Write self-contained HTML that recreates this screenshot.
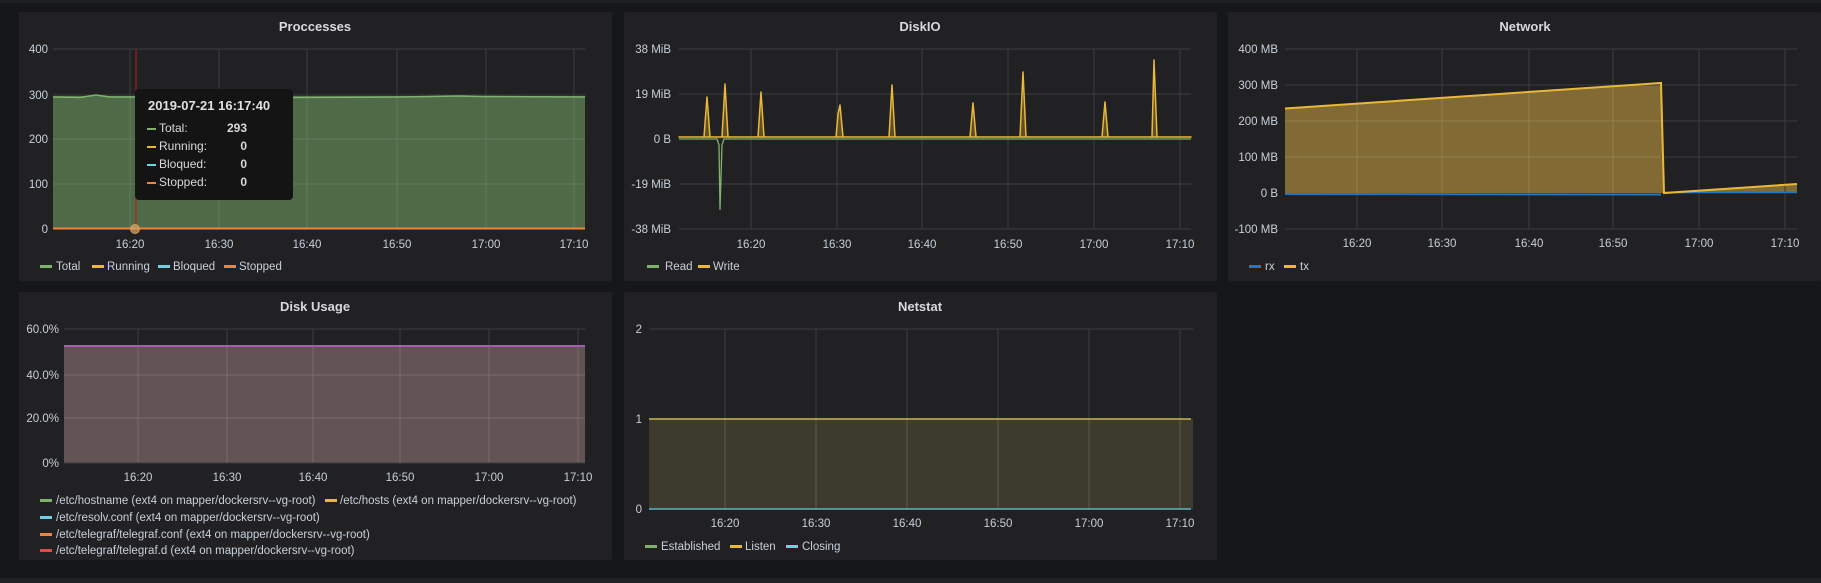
<!DOCTYPE html>
<html><head><meta charset="utf-8"><style>
html,body{margin:0;padding:0;background:#161719;width:1821px;height:583px;overflow:hidden}
svg{display:block}
text{font-family:"Liberation Sans",sans-serif}
.t{fill:#d8d9da;font-size:13px;font-weight:bold}
.ax{fill:#c7d0d9;font-size:11.5px}
.lg{fill:#c7d0d9;font-size:11.5px}
.g{stroke:#3a3b3e;stroke-width:1}
</style></head><body>
<svg width="1821" height="583" viewBox="0 0 1821 583">
<rect x="0" y="0" width="1821" height="583" fill="#161719"/>
<rect x="0" y="0" width="1821" height="3" fill="#1d1e20"/>
<rect x="0" y="578" width="1821" height="5" fill="#1f2022"/>
<!-- panels -->
<rect x="19" y="12" width="593" height="269" rx="2" fill="#212124"/>
<rect x="624" y="12" width="593" height="269" rx="2" fill="#212124"/>
<rect x="1228" y="12" width="593" height="269" rx="2" fill="#212124"/>
<rect x="19" y="292" width="593" height="268" rx="2" fill="#212124"/>
<rect x="624" y="292" width="593" height="268" rx="2" fill="#212124"/>

<!-- P1 Processes -->
<text class="t" x="315" y="31" text-anchor="middle">Proccesses</text>
<rect x="53" y="96" width="532" height="133" fill="#4f6a47"/>
<g class="g" stroke="#555">
<line x1="53" y1="49" x2="585" y2="49" stroke="#3c3d40"/><line x1="53" y1="95" x2="585" y2="95" stroke="#3c3d40"/>
<line x1="53" y1="139" x2="585" y2="139" stroke="#647b5d"/><line x1="53" y1="184" x2="585" y2="184" stroke="#647b5d"/>
<line x1="53" y1="229" x2="585" y2="229" stroke="#3c3d40"/>
</g>
<g stroke="#647b5d"><line x1="130" y1="96" x2="130" y2="229"/><line x1="219" y1="96" x2="219" y2="229"/><line x1="307" y1="96" x2="307" y2="229"/><line x1="397" y1="96" x2="397" y2="229"/><line x1="486" y1="96" x2="486" y2="229"/><line x1="574" y1="96" x2="574" y2="229"/></g>
<g stroke="#3c3d40"><line x1="130" y1="49" x2="130" y2="96"/><line x1="219" y1="49" x2="219" y2="96"/><line x1="307" y1="49" x2="307" y2="96"/><line x1="397" y1="49" x2="397" y2="96"/><line x1="486" y1="49" x2="486" y2="96"/><line x1="574" y1="49" x2="574" y2="96"/></g>
<polyline points="53,97 80,97.5 96,95 110,97 200,97 300,97.5 400,97 460,96 480,96.5 585,97" fill="none" stroke="#7eb26d" stroke-width="1.5"/>
<line x1="53" y1="228.5" x2="585" y2="228.5" stroke="#ef843c" stroke-width="2"/>
<g class="ax" text-anchor="end"><text x="48" y="53">400</text><text x="48" y="99">300</text><text x="48" y="143">200</text><text x="48" y="188">100</text><text x="48" y="233">0</text></g>
<g class="ax" text-anchor="middle"><text x="130" y="248">16:20</text><text x="219" y="248">16:30</text><text x="307" y="248">16:40</text><text x="397" y="248">16:50</text><text x="486" y="248">17:00</text><text x="574" y="248">17:10</text></g>
<g class="lg"><rect x="40" y="265" width="12" height="3" fill="#7eb26d"/><text x="56" y="270">Total</text>
<rect x="92" y="265" width="12" height="3" fill="#eab839"/><text x="107" y="270">Running</text>
<rect x="158" y="265" width="12" height="3" fill="#6ed0e0"/><text x="173" y="270">Bloqued</text>
<rect x="224" y="265" width="12" height="3" fill="#ef843c"/><text x="239" y="270">Stopped</text></g>
<line x1="136" y1="49" x2="136" y2="229" stroke="#c41a16" stroke-width="1"/>
<circle cx="135" cy="229" r="4.5" fill="#d8a869" fill-opacity="0.7" stroke="#c89a5a"/>
<rect x="135" y="89" width="158" height="111" rx="4" fill="#141414"/>
<text x="148" y="110" fill="#e0e0e0" font-size="13" font-weight="bold">2019-07-21 16:17:40</text>
<g font-size="12" fill="#d8d9da">
<rect x="147" y="128" width="9" height="2" fill="#7eb26d"/><text x="159" y="132">Total:</text><text x="247" y="132" text-anchor="end" font-weight="bold">293</text>
<rect x="147" y="146" width="9" height="2" fill="#eab839"/><text x="159" y="150">Running:</text><text x="247" y="150" text-anchor="end" font-weight="bold">0</text>
<rect x="147" y="164" width="9" height="2" fill="#6ed0e0"/><text x="159" y="168">Bloqued:</text><text x="247" y="168" text-anchor="end" font-weight="bold">0</text>
<rect x="147" y="182" width="9" height="2" fill="#ef843c"/><text x="159" y="186">Stopped:</text><text x="247" y="186" text-anchor="end" font-weight="bold">0</text>
</g>

<!-- P2 DiskIO -->
<text class="t" x="920" y="31" text-anchor="middle">DiskIO</text>
<g stroke="#3c3d40"><line x1="679" y1="49" x2="1191" y2="49"/><line x1="679" y1="94" x2="1191" y2="94"/><line x1="679" y1="139" x2="1191" y2="139"/><line x1="679" y1="184" x2="1191" y2="184"/><line x1="679" y1="229" x2="1191" y2="229"/>
<line x1="751" y1="49" x2="751" y2="229"/><line x1="837" y1="49" x2="837" y2="229"/><line x1="922" y1="49" x2="922" y2="229"/><line x1="1008" y1="49" x2="1008" y2="229"/><line x1="1094" y1="49" x2="1094" y2="229"/><line x1="1180" y1="49" x2="1180" y2="229"/></g>
<polyline points="679,139 717,139 719,145 720,210 722,145 724,139 1191,139" fill="none" stroke="#7eb26d" stroke-width="1.3"/>
<path d="M679,137 L704,137 L707,97 L710,137 L722,137 L725,84 L728,137 L758,137 L761,92 L764,137 L836,137 L838,114 L840,105 L843,137 L889,137 L892,85 L895,137 L970,137 L973,103 L976,137 L1020,137 L1023,72 L1026,137 L1102,137 L1105,102 L1108,137 L1152,137 L1154,60 L1157,137 L1191,137 Z" fill="#eab839" fill-opacity="0.3" stroke="#eab839" stroke-width="1.5" stroke-linejoin="round"/>
<g class="ax" text-anchor="end"><text x="671" y="53">38 MiB</text><text x="671" y="98">19 MiB</text><text x="671" y="143">0 B</text><text x="671" y="188">-19 MiB</text><text x="671" y="233">-38 MiB</text></g>
<g class="ax" text-anchor="middle"><text x="751" y="248">16:20</text><text x="837" y="248">16:30</text><text x="922" y="248">16:40</text><text x="1008" y="248">16:50</text><text x="1094" y="248">17:00</text><text x="1180" y="248">17:10</text></g>
<g class="lg"><rect x="647" y="265" width="12" height="3" fill="#7eb26d"/><text x="665" y="270">Read</text>
<rect x="698" y="265" width="12" height="3" fill="#eab839"/><text x="713" y="270">Write</text></g>

<!-- P3 Network -->
<text class="t" x="1525" y="31" text-anchor="middle">Network</text>
<path d="M1285,108.5 L1661,83 L1664,193 L1797,184 L1797,193 L1285,193 Z" fill="#816a33"/>
<g stroke="#3c3d40"><line x1="1285" y1="49" x2="1797" y2="49"/><line x1="1661" y1="85" x2="1797" y2="85"/><line x1="1661" y1="121" x2="1797" y2="121"/><line x1="1661" y1="157" x2="1797" y2="157"/><line x1="1285" y1="229" x2="1797" y2="229"/>
<line x1="1699" y1="49" x2="1699" y2="229"/><line x1="1785" y1="49" x2="1785" y2="229"/></g>
<g stroke="#93804f"><line x1="1285" y1="121" x2="1661" y2="121"/><line x1="1285" y1="157" x2="1661" y2="157"/>
<line x1="1357" y1="104" x2="1357" y2="193"/><line x1="1442" y1="98" x2="1442" y2="193"/><line x1="1529" y1="92" x2="1529" y2="193"/><line x1="1613" y1="86" x2="1613" y2="193"/></g>
<g stroke="#3c3d40"><line x1="1285" y1="85" x2="1661" y2="85"/><line x1="1357" y1="49" x2="1357" y2="104"/><line x1="1442" y1="49" x2="1442" y2="98"/><line x1="1529" y1="49" x2="1529" y2="92"/><line x1="1613" y1="49" x2="1613" y2="86"/><line x1="1357" y1="193" x2="1357" y2="229"/><line x1="1442" y1="193" x2="1442" y2="229"/><line x1="1529" y1="193" x2="1529" y2="229"/><line x1="1613" y1="193" x2="1613" y2="229"/></g>
<line x1="1285" y1="194" x2="1661" y2="194.5" stroke="#1f78c1" stroke-width="2"/>
<line x1="1664" y1="192.5" x2="1797" y2="192.5" stroke="#1f78c1" stroke-width="1.5"/>
<polyline points="1285,108.5 1661,83 1664,193 1797,184" fill="none" stroke="#eab839" stroke-width="2"/>
<g class="ax" text-anchor="end"><text x="1278" y="53">400 MB</text><text x="1278" y="89">300 MB</text><text x="1278" y="125">200 MB</text><text x="1278" y="161">100 MB</text><text x="1278" y="197">0 B</text><text x="1278" y="233">-100 MB</text></g>
<g class="ax" text-anchor="middle"><text x="1357" y="247">16:20</text><text x="1442" y="247">16:30</text><text x="1529" y="247">16:40</text><text x="1613" y="247">16:50</text><text x="1699" y="247">17:00</text><text x="1785" y="247">17:10</text></g>
<g class="lg"><rect x="1249" y="265" width="12" height="3" fill="#1f78c1"/><text x="1265" y="270">rx</text>
<rect x="1284" y="265" width="12" height="3" fill="#eab839"/><text x="1300" y="270">tx</text></g>

<!-- P4 Disk Usage -->
<text class="t" x="315" y="311" text-anchor="middle">Disk Usage</text>
<rect x="64" y="346" width="521" height="117" fill="#645355"/>
<g stroke="#3c3d40"><line x1="64" y1="329" x2="585" y2="329"/><line x1="138" y1="329" x2="138" y2="346"/><line x1="227" y1="329" x2="227" y2="346"/><line x1="313" y1="329" x2="313" y2="346"/><line x1="400" y1="329" x2="400" y2="346"/><line x1="489" y1="329" x2="489" y2="346"/><line x1="578" y1="329" x2="578" y2="346"/></g>
<g stroke="#7a6b6c"><line x1="64" y1="375" x2="585" y2="375"/><line x1="64" y1="418" x2="585" y2="418"/><line x1="138" y1="346" x2="138" y2="463"/><line x1="227" y1="346" x2="227" y2="463"/><line x1="313" y1="346" x2="313" y2="463"/><line x1="400" y1="346" x2="400" y2="463"/><line x1="489" y1="346" x2="489" y2="463"/><line x1="578" y1="346" x2="578" y2="463"/></g>
<line x1="64" y1="463" x2="585" y2="463" stroke="#3c3d40"/>
<line x1="64" y1="346" x2="585" y2="346" stroke="#a160b0" stroke-width="2"/>
<g class="ax" text-anchor="end"><text x="59" y="333">60.0%</text><text x="59" y="379">40.0%</text><text x="59" y="422">20.0%</text><text x="59" y="467">0%</text></g>
<g class="ax" text-anchor="middle"><text x="138" y="481">16:20</text><text x="227" y="481">16:30</text><text x="313" y="481">16:40</text><text x="400" y="481">16:50</text><text x="489" y="481">17:00</text><text x="578" y="481">17:10</text></g>
<g class="lg">
<rect x="40" y="499" width="12" height="3" fill="#7eb26d"/><text x="56" y="504">/etc/hostname (ext4 on mapper/dockersrv--vg-root)</text>
<rect x="325" y="499" width="12" height="3" fill="#eab839"/><text x="340" y="504">/etc/hosts (ext4 on mapper/dockersrv--vg-root)</text>
<rect x="40" y="516" width="12" height="3" fill="#6ed0e0"/><text x="56" y="521">/etc/resolv.conf (ext4 on mapper/dockersrv--vg-root)</text>
<rect x="40" y="533" width="12" height="3" fill="#ef843c"/><text x="56" y="538">/etc/telegraf/telegraf.conf (ext4 on mapper/dockersrv--vg-root)</text>
<rect x="40" y="549" width="12" height="3" fill="#e24d42"/><text x="56" y="554">/etc/telegraf/telegraf.d (ext4 on mapper/dockersrv--vg-root)</text>
</g>

<!-- P5 Netstat -->
<text class="t" x="920" y="311" text-anchor="middle">Netstat</text>
<rect x="649" y="419" width="544" height="90" fill="#3d3b2d"/>
<g stroke="#3c3d40"><line x1="649" y1="329" x2="1193" y2="329"/><line x1="725" y1="329" x2="725" y2="419"/><line x1="816" y1="329" x2="816" y2="419"/><line x1="907" y1="329" x2="907" y2="419"/><line x1="998" y1="329" x2="998" y2="419"/><line x1="1089" y1="329" x2="1089" y2="419"/><line x1="1180" y1="329" x2="1180" y2="419"/></g>
<g stroke="#5d5b4e"><line x1="725" y1="419" x2="725" y2="509"/><line x1="816" y1="419" x2="816" y2="509"/><line x1="907" y1="419" x2="907" y2="509"/><line x1="998" y1="419" x2="998" y2="509"/><line x1="1089" y1="419" x2="1089" y2="509"/><line x1="1180" y1="419" x2="1180" y2="509"/></g>
<line x1="649" y1="419" x2="1191" y2="419" stroke="#c9b84f" stroke-width="1.5"/>
<line x1="649" y1="509" x2="1191" y2="509" stroke="#5fb3bf" stroke-width="1.5"/>
<g class="ax" text-anchor="end"><text x="642" y="333">2</text><text x="642" y="423">1</text><text x="642" y="513">0</text></g>
<g class="ax" text-anchor="middle"><text x="725" y="527">16:20</text><text x="816" y="527">16:30</text><text x="907" y="527">16:40</text><text x="998" y="527">16:50</text><text x="1089" y="527">17:00</text><text x="1180" y="527">17:10</text></g>
<g class="lg"><rect x="645" y="545" width="12" height="3" fill="#7eb26d"/><text x="661" y="550">Established</text>
<rect x="730" y="545" width="12" height="3" fill="#eab839"/><text x="745" y="550">Listen</text>
<rect x="786" y="545" width="12" height="3" fill="#6ed0e0"/><text x="802" y="550">Closing</text></g>
</svg>
</body></html>
